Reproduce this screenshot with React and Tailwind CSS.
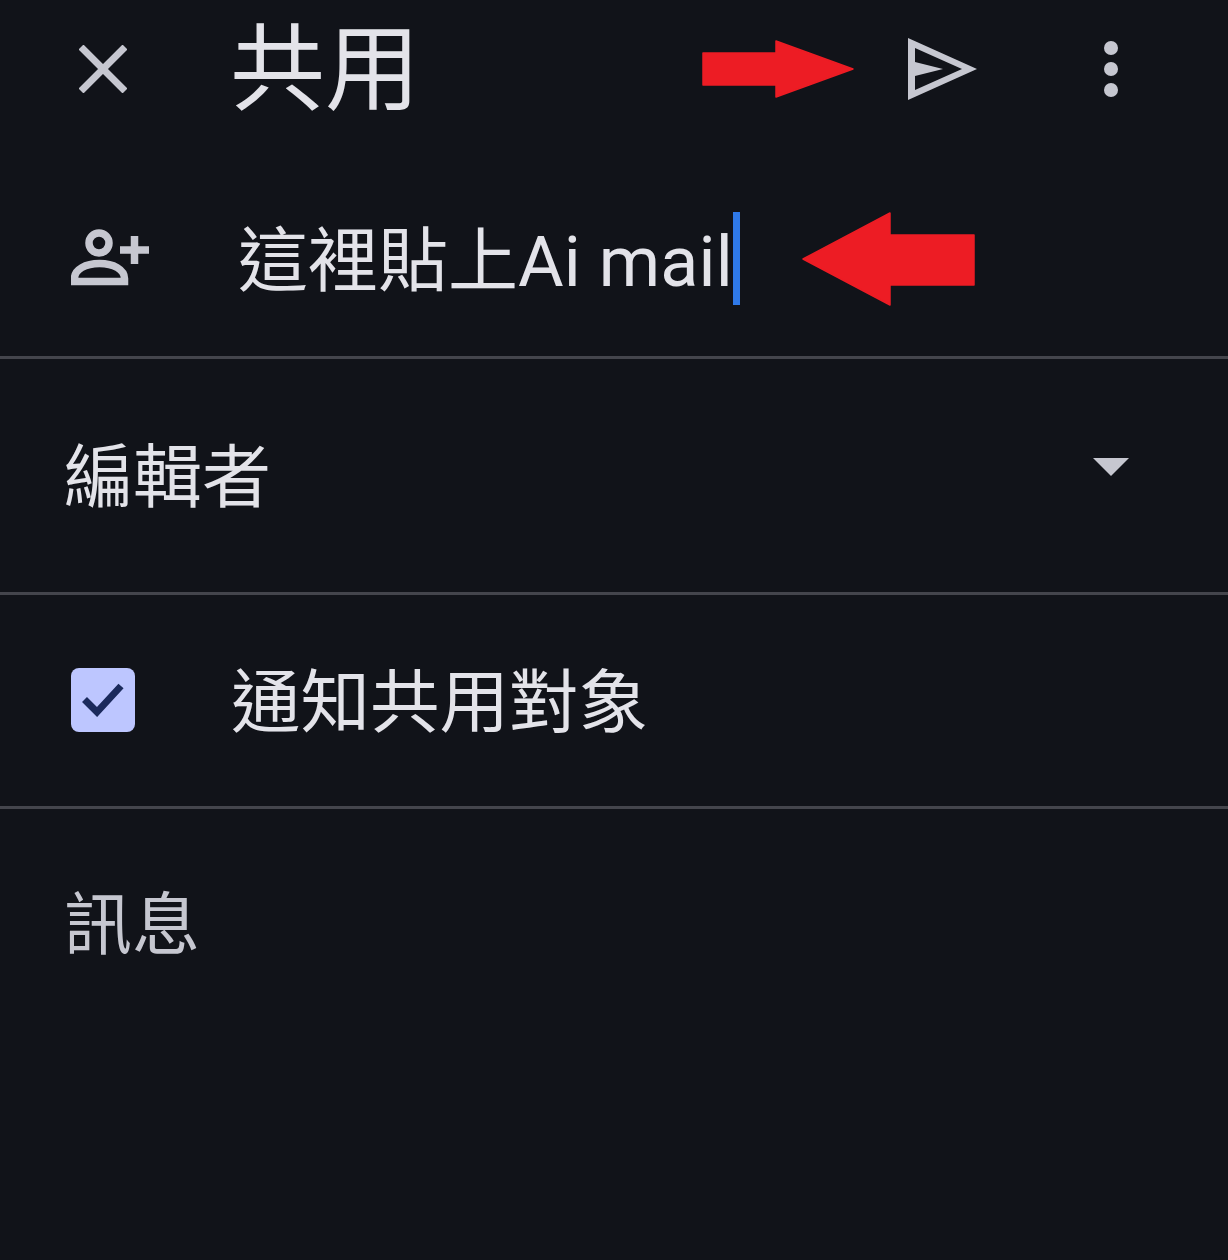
const CJK = "font-['Roboto','Noto_Sans_CJK_TC',sans-serif]";

export default function App() {
  return (
    <main className={`relative min-h-[1260px] bg-[#111319] text-[#e3e3e9] ${CJK}`}>
      {/* top bar */}
      <header className="flex h-[138px] items-center pl-[79px] pr-[110px]">
        <svg className="h-[48px] w-[48px] shrink-0" viewBox="0 0 48 48" stroke="#c6c7d0" strokeWidth="7">
          <path d="M2 2l44 44M46 2 2 46" />
        </svg>
        <h1 className="ml-[103px] pt-[2px] text-[95px] leading-none font-normal">共用</h1>
        <svg className="ml-auto h-[62px] w-[69px] shrink-0" viewBox="0 0 69 62" fill="#c6c7d0">
          <path fillRule="evenodd" d="M0 0l69 31L0 62zM7 10v14l28 7-28 7v14l47-21z" />
        </svg>
        <svg className="ml-[127px] h-[56px] w-[14px] shrink-0" viewBox="0 0 14 56" fill="#c6c7d0">
          <circle cx="7" cy="7" r="7" />
          <circle cx="7" cy="28" r="7" />
          <circle cx="7" cy="49" r="7" />
        </svg>
      </header>

      {/* recipient */}
      <section className="flex h-[221px] items-center border-b-[3px] border-[#44454c] pt-[22px] pl-[71px]">
        <svg className="h-[58px] w-[78px] shrink-0" viewBox="0 0 78 58" fill="none" stroke="#c6c7d0" strokeWidth="7.5">
          <circle cx="28" cy="14" r="10" />
          <path d="M3.500 52.500v-3c0-9 11-15 25-15s25 6 25 15v3z" />
          <path d="M49 21h29M63.500 7v28" />
        </svg>
        <span className="ml-[89px] pt-[8px] text-[70px] leading-none font-normal whitespace-nowrap">
          這裡貼上<span className="tracking-[0.2px]">Ai mail</span>
        </span>
        <span className="h-[93px] w-[7px] bg-[#2f79e8]" />
      </section>

      {/* role */}
      <section className="flex h-[236px] items-center justify-between border-b-[3px] border-[#44454c] pr-[99px] pl-[64px]">
        <span className="pt-[6px] text-[69px] leading-none font-normal">編輯者</span>
        <span className="mb-[18px] h-0 w-0 border-x-[18px] border-t-[18px] border-x-transparent border-t-[#c6c7d0]" />
      </section>

      {/* notify */}
      <section className="flex h-[214px] items-center border-b-[3px] border-[#44454c] pl-[71px]">
        <span className="mb-[2px] flex h-[64px] w-[64px] items-center justify-center rounded-[8px] bg-[#bdc6ff]">
          <svg className="h-[34px] w-[42px]" viewBox="0 0 42 34" fill="none" stroke="#1b2a5c" strokeWidth="7">
            <path d="M2.500 16.500 15 29 39 3" />
          </svg>
        </span>
        <span className="ml-[96px] pt-[6px] text-[69.500px] leading-none font-normal">通知共用對象</span>
      </section>

      {/* message */}
      <section className="pt-[83px] pl-[64px]">
        <span className="text-[68px] leading-none font-normal text-[#c6c7d0]">訊息</span>
      </section>

      {/* annotations */}
      <svg className="absolute top-[40px] left-[702px] h-[58px] w-[152px]" viewBox="0 0 152 58" fill="#ed1c24">
        <path d="M151 29 74 1v12H1v32h73v12z" stroke="#ed1c24" strokeWidth="1.500" strokeLinejoin="round" />
      </svg>
      <svg className="absolute top-[212px] left-[802px] h-[94px] w-[173px]" viewBox="0 0 173 94" fill="#ed1c24">
        <path d="M1 47 88 1v22h84v50H88v20z" stroke="#ed1c24" strokeWidth="1.500" strokeLinejoin="round" />
      </svg>
    </main>
  );
}
